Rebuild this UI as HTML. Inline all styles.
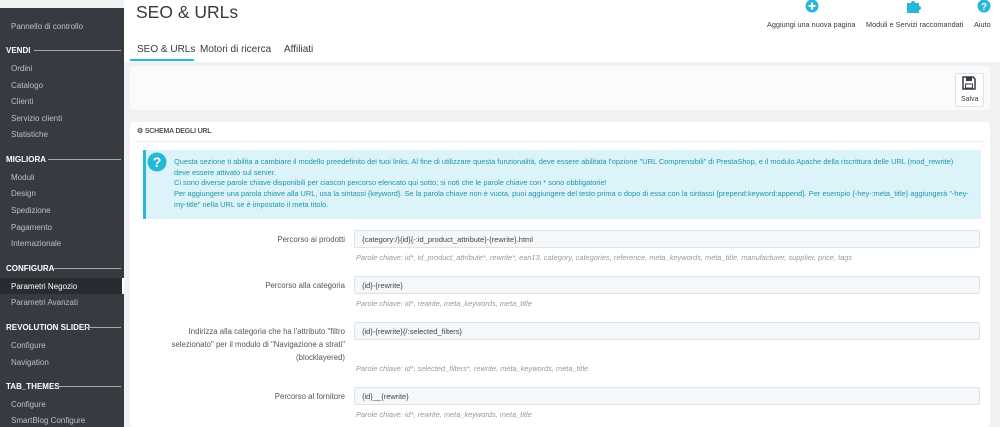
<!DOCTYPE html>
<html><head><meta charset="utf-8"><style>
*{margin:0;padding:0;box-sizing:border-box}
body{width:1000px;height:427px;overflow:hidden;background:#eff1f2;font-family:"Liberation Sans",sans-serif;font-size:8px;color:#555;position:relative}
.a{position:absolute;white-space:nowrap}
#sb{left:0;top:8px;width:124px;height:419px;background:#363a41}
.si{position:absolute;left:11px;color:#bcc0c5;font-size:8px}
.sh{position:absolute;left:6px;color:#fff;font-weight:bold;font-size:8px}
.sl{position:absolute;height:1px;background:#aaa;right:3px}
#hdr{left:124px;top:0;width:876px;height:62px;background:#fff}
.inp{position:absolute;left:354px;width:626px;height:18px;background:#f4f8fa;border:1px solid #dde3e6;border-radius:2px;font-size:7.5px;color:#444;padding:4px 0 0 7px}
.lab{position:absolute;right:655px;text-align:right;font-size:7.8px;color:#555;line-height:13px}
.help{position:absolute;left:356px;font-size:7.4px;color:#999;font-style:italic}
</style></head><body>
<div class="a" id="hdr"></div>
<div class="a" id="sb">
<div class="si" style="top:14px">Pannello di controllo</div>
<div class="sh" style="top:38px">VENDI</div><div class="sl" style="top:42px;left:34px"></div>
<div class="si" style="top:56px">Ordini</div>
<div class="si" style="top:73px">Catalogo</div>
<div class="si" style="top:89px">Clienti</div>
<div class="si" style="top:106px">Servizio clienti</div>
<div class="si" style="top:122px">Statistiche</div>
<div class="sh" style="top:147px">MIGLIORA</div><div class="sl" style="top:151px;left:48px"></div>
<div class="si" style="top:165px">Moduli</div>
<div class="si" style="top:181px">Design</div>
<div class="si" style="top:198px">Spedizione</div>
<div class="si" style="top:215px">Pagamento</div>
<div class="si" style="top:231px">Internazionale</div>
<div class="sh" style="top:256px">CONFIGURA</div><div class="sl" style="top:260px;left:54px"></div>
<div style="position:absolute;left:0;top:270px;width:124px;height:16px;background:#282b30;border-right:2px solid #fff"></div>
<div class="si" style="top:274px;color:#fff">Parametri Negozio</div>
<div class="si" style="top:290px">Parametri Avanzati</div>
<div class="sh" style="top:315px">REVOLUTION SLIDER</div><div class="sl" style="top:319px;left:85px"></div>
<div class="si" style="top:333px">Configure</div>
<div class="si" style="top:350px">Navigation</div>
<div class="sh" style="top:374px">TAB_THEMES</div><div class="sl" style="top:378px;left:58px"></div>
<div class="si" style="top:392px">Configure</div>
<div class="si" style="top:408px">SmartBlog Configure</div>
</div>
<div class="a" style="left:136px;top:2px;font-size:17.5px;color:#363a41">SEO &amp; URLs</div>
<div class="a" style="left:137px;top:44px;font-size:10px;color:#363a41">SEO &amp; URLs</div>
<div class="a" style="left:200px;top:44px;font-size:10px;color:#363a41">Motori di ricerca</div>
<div class="a" style="left:284px;top:44px;font-size:10px;color:#363a41">Affiliati</div>
<div class="a" style="left:130px;top:59px;width:64px;height:2px;background:#25b9d7"></div>
<svg class="a" style="left:804px;top:0" width="16" height="14"><circle cx="8" cy="6" r="6.5" fill="#25b9d7"/><path d="M8 2.5v7M4.5 6h7" stroke="#fff" stroke-width="2"/></svg>
<svg class="a" style="left:906px;top:0" width="18" height="14"><path d="M1 3h4a2 2 0 1 1 4 0h4v3a2 2 0 1 1 0 4v3H1z" fill="#25b9d7"/></svg>
<svg class="a" style="left:976px;top:0" width="16" height="14"><circle cx="8" cy="6" r="6.5" fill="#25b9d7"/><text x="8" y="10" font-size="10" font-weight="bold" fill="#fff" text-anchor="middle" font-family="Liberation Sans">?</text></svg>
<div class="a" style="left:767px;top:20px;font-size:7.3px;color:#363a41">Aggiungi una nuova pagina</div>
<div class="a" style="left:866px;top:20px;font-size:7.3px;color:#363a41">Moduli e Servizi raccomandati</div>
<div class="a" style="left:974px;top:20px;font-size:7.3px;color:#363a41">Aiuto</div>
<div class="a" style="left:130px;top:66px;width:860px;height:44px;background:#fafbfc;border-radius:2px"></div>
<div class="a" style="left:955px;top:73px;width:29px;height:34px;background:#fff;border:1px solid #dde3e6;border-radius:2px"></div>
<svg class="a" style="left:962px;top:76px" width="14" height="14"><path d="M1 1h10l2 2v10H1z" fill="none" stroke="#363a41" stroke-width="1.5"/><rect x="4" y="1.5" width="6" height="3.5" fill="#363a41"/><rect x="3.5" y="8" width="7" height="4" fill="none" stroke="#363a41"/></svg>
<div class="a" style="left:961px;top:96px;font-size:7px;color:#363a41">Salva</div>
<div class="a" style="left:130px;top:122px;width:860px;height:305px;background:#fff;border-radius:3px"></div>
<div class="a" style="left:137px;top:127px;font-size:7px;font-weight:bold;color:#555;letter-spacing:-0.2px">&#9881; SCHEMA DEGLI URL</div>
<div class="a" style="left:134px;top:141px;width:852px;height:1px;background:#eee"></div>
<div class="a" style="left:143px;top:150px;width:838px;height:69px;background:#dcf4f9;border-left:3px solid #25b9d7"></div>
<svg class="a" style="left:147px;top:152px" width="20" height="20"><circle cx="10" cy="10" r="9.5" fill="#25b9d7"/><text x="10" y="15" font-size="14" font-weight="bold" fill="#fff" text-anchor="middle" font-family="Liberation Sans">?</text></svg>
<div class="a" style="left:174px;top:157px;font-size:7.4px;color:#1e94ab;line-height:10.7px">Questa sezione ti abilita a cambiare il modello preedefinito dei tuoi links. Al fine di utilizzare questa funzionalità, deve essere abilitata l'opzione "URL Comprensibili" di PrestaShop, e il modulo Apache della riscrittura delle URL (mod_rewrite)<br>deve essere attivato sul server.<br>Ci sono diverse parole chiave disponibili per ciascon percorso elencato qui sotto; si noti che le parole chiave con * sono obbligatorie!<br>Per aggiungere una parola chiave alla URL, usa la sintassi {keyword}. Se la parola chiave non è vuota, puoi aggiungere del testo prima o dopo di essa con la sintassi {prepend:keyword:append}. Per esempio {-hey-:meta_title} aggiungerà "-hey-<br>my-title" nella URL se è impostato il meta titolo.</div>
<div class="lab" style="top:233px">Percorso ai prodotti</div>
<div class="inp" style="top:230px">{category:/}{id}{-:id_product_attribute}-{rewrite}.html</div>
<div class="help" style="top:253px">Parole chiave: id*, id_product_attribute*, rewrite*, ean13, category, categories, reference, meta_keywords, meta_title, manufacturer, supplier, price, tags</div>
<div class="lab" style="top:279px">Percorso alla categoria</div>
<div class="inp" style="top:276px">{id}-{rewrite}</div>
<div class="help" style="top:299px">Parole chiave: id*, rewrite, meta_keywords, meta_title</div>
<div class="lab" style="top:325px">Indirizza alla categoria che ha l'attributo "filtro<br>selezionato" per il modulo di "Navigazione a strati"<br>(blocklayered)</div>
<div class="inp" style="top:322px">{id}-{rewrite}{/:selected_filters}</div>
<div class="help" style="top:364px">Parole chiave: id*, selected_filters*, rewrite, meta_keywords, meta_title</div>
<div class="lab" style="top:390px">Percorso al fornitore</div>
<div class="inp" style="top:387px">{id}__{rewrite}</div>
<div class="help" style="top:410px">Parole chiave: id*, rewrite, meta_keywords, meta_title</div>
</body></html>
